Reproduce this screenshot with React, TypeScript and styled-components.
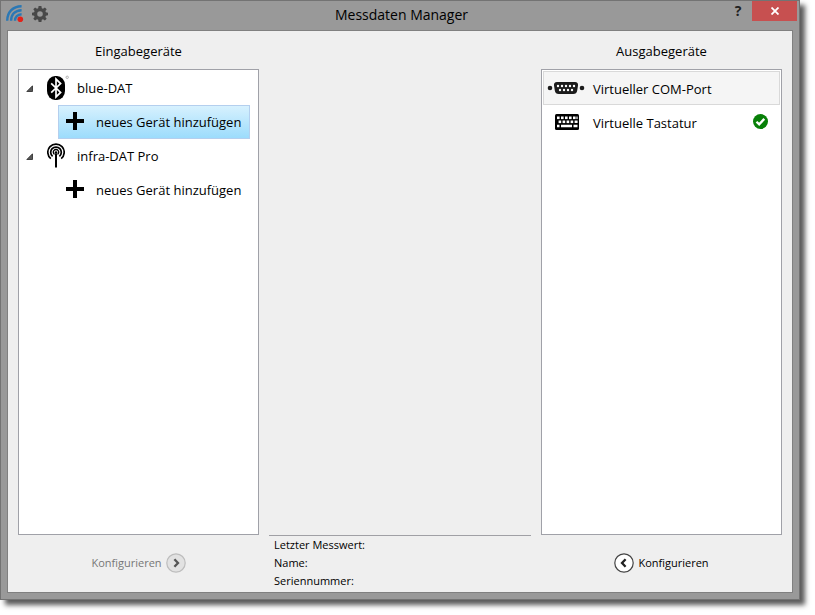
import React, { useState } from "react";
import styled, { createGlobalStyle, css } from "styled-components";

const GlobalStyle = createGlobalStyle`
  *, *::before, *::after { box-sizing: border-box; }
  body { margin: 0; background: #fff; color: #000; font-family: "Open Sans", "Noto Sans", sans-serif; font-size: 13px; line-height: 18px; }
  button { margin: 0; padding: 0; border: 0; background: none; color: inherit; font: inherit; }
  svg { display: block; flex: none; }
`;

const Desktop = styled.div`
  height: 100vh;
  padding: 0 15px 15px 0;
`;

const Window = styled.div`
  display: flex;
  flex-direction: column;
  height: 100%;
  padding: 0 6px 6px;
  border: 1px solid #737373;
  background: #999;
  box-shadow: 5px 5px 5px rgba(0, 0, 0, 0.65);
`;

const TitleBar = styled.header`
  display: grid;
  grid-template-columns: 1fr auto 1fr;
  height: 29px;
  flex: none;
  margin: 0 -4px 0 -1px;
`;

const TitleIcons = styled.div`
  display: flex;
  align-items: center;
  gap: 8px;
  height: 26px;
`;

const Title = styled.h1`
  margin: 0;
  font-size: 14px;
  font-weight: 400;
  line-height: 28px;
`;

const Controls = styled.div`
  display: flex;
  justify-content: flex-end;
  align-items: flex-start;
`;

const HelpButton = styled.button`
  width: 28px;
  height: 20px;
  font-size: 14px;
  font-weight: 700;
  color: #222;
`;

const CloseButton = styled.button`
  display: grid;
  place-items: center;
  width: 45px;
  height: 20px;
  background: #c75050;
`;

const Client = styled.main`
  flex: 1;
  min-height: 0;
  display: grid;
  grid-template-columns: 23fr 25fr 23fr;
  gap: 10px;
  padding: 0 10px;
  border: 1px solid #808080;
  background: #efefef;
`;

const Panel = styled.section`
  display: grid;
  grid-template-rows: 38px 1fr 57px;
  min-width: 0;
`;

const Heading = styled.h2`
  margin: 0;
  font-size: 13px;
  font-weight: 400;
  line-height: 40px;
  text-align: center;
`;

const List = styled.ul`
  margin: 0;
  padding: 1px;
  border: 1px solid #a0a1a8;
  background: #fff;
  list-style: none;
`;

const SubList = styled.ul`
  margin: 0;
  padding: 0 7px 0 38px;
  list-style: none;
`;

const GroupRow = styled.div`
  display: flex;
  align-items: center;
  height: 34px;
  padding-left: 3px;
`;

const Toggle = styled.button`
  display: grid;
  place-items: center;
  width: 12px;
  height: 16px;
  margin-right: 12px;
`;

const GroupIcon = styled.span`
  width: 30px;
`;

const AddButton = styled.button<{ $selected?: boolean }>`
  display: flex;
  align-items: center;
  gap: 11px;
  width: 100%;
  height: 34px;
  padding-left: 7px;
  border: 1px solid transparent;
  white-space: nowrap;
  ${(p) => p.$selected && css`
    border-color: #b4cfee;
    background: linear-gradient(#d7f1fe, #9cdcfc);
  `}
`;

const OutputRow = styled.button<{ $selected?: boolean }>`
  display: grid;
  grid-template-columns: 38px 1fr auto;
  align-items: center;
  gap: 8px;
  width: 100%;
  height: 34px;
  padding: 0 11px 0 3px;
  border: 1px solid ${(p) => (p.$selected ? "#d9d9d9" : "transparent")};
  background: ${(p) => (p.$selected ? "#f5f5f5" : "transparent")};
  text-align: left;
`;

const OutputName = styled.span`
  padding-top: 2px;
`;

const Footer = styled.footer`
  display: flex;
  justify-content: center;
  align-items: center;
  padding-bottom: 2px;
`;

const ConfigButton = styled.button`
  display: flex;
  align-items: center;
  gap: 4px;
  font-size: 11px;
  white-space: nowrap;
  &:disabled { color: #777; }
`;

const Details = styled.dl`
  align-self: end;
  margin: 0;
  padding: 0 5px 2px;
  border-top: 1px solid #a0a0a5;
  font-size: 11px;
`;

const DetailRow = styled.div`
  display: flex;
  gap: 4px;
  height: 18px;
`;

const DetailValue = styled.dd`
  margin: 0;
`;

const LogoIcon = () => (
  <svg width="18" height="18" viewBox="0 0 18 18" fill="none" stroke="#2b78b5" strokeWidth="2.4">
    <path d="M1.2 15.8C1.2 7.5 6.5 1.3 15.6 1.2M5.1 15.8C5.1 9.5 9 5.4 15.6 5.2M9 15.8c0-3.8 2.6-6.4 6.6-6.6" />
    <circle cx="14.3" cy="14.3" r="2.8" fill="#e32219" stroke="none" />
  </svg>
);

const GearIcon = () => (
  <svg width="16" height="16" viewBox="0 0 16 16" fill="#484848">
    <path fillRule="evenodd" d="M6.6 0h2.8l.4 2.2 1.2.5 1.9-1.3 1.8 1.8-1.3 1.9.5 1.2 2.1.4v2.6l-2.1.4-.5 1.2 1.3 1.9-1.8 1.8-1.9-1.3-1.2.5-.4 2.2H6.6l-.4-2.2-1.2-.5-1.9 1.3-1.8-1.8 1.3-1.9-.5-1.2L0 9.3V6.7l2.1-.4.5-1.2-1.3-1.9 1.8-1.8L5 2.7l1.2-.5zM8 5.2a2.8 2.8 0 1 0 0 5.6 2.8 2.8 0 0 0 0-5.6z" />
  </svg>
);

const CloseIcon = () => (
  <svg width="8" height="8" viewBox="0 0 8 8" stroke="#fff" strokeWidth="1.8">
    <path d="M.5.5l7 7M7.5.5l-7 7" />
  </svg>
);

const ExpandedIcon = () => (
  <svg width="7" height="7" viewBox="0 0 7 7">
    <path d="M6.5.8v5.7H.8z" fill="#595959" stroke="#262626" strokeWidth=".8" />
  </svg>
);

const BluetoothIcon = () => (
  <svg width="22" height="26" viewBox="0 0 22 26" fill="none">
    <rect x="0" y="1" width="18" height="24" rx="8" ry="9" fill="#000" />
    <path d="M4.2 8.4l9.4 9-4.6 4.5V4.1l4.6 4.5-9.4 9" stroke="#fff" strokeWidth="1.7" />
    <circle cx="20.2" cy="2.3" r="1.2" stroke="#aaa" strokeWidth=".9" />
  </svg>
);

const AntennaIcon = () => (
  <svg width="18" height="26" viewBox="0 0 18 26" fill="none" stroke="#000" strokeWidth="1.7">
    <path d="M3.800 15.600A8.200 8.200 0 1 1 14.200 15.600M5.600 13.400a5.300 5.300 0 1 1 6.800 0" />
    <path d="M7.500 11.400a2.700 2.700 0 1 1 3 0" strokeWidth="1.4" />
    <path d="M9 10.500V24.500" strokeWidth="2" />
    <circle cx="9" cy="9.500" r="1.3" fill="#000" stroke="none" />
  </svg>
);

const PlusIcon = () => (
  <svg width="19" height="20" viewBox="0 0 19 20" stroke="#000" strokeWidth="4">
    <path d="M0 9h18M9 0v18" />
  </svg>
);

const SerialIcon = () => (
  <svg width="38" height="14" viewBox="0 0 38 14" fill="#1c1c1c">
    <circle cx="3" cy="7" r="2.3" />
    <circle cx="35" cy="7" r="2.3" />
    <path d="M10 1h18q3.4 0 3 3.500l-.8 5q-.5 3.500-4 3.500H11.800q-3.500 0-4-3.500l-.8-5Q6.600 1 10 1z" />
    <g fill="#fff">
      {[11, 15, 19, 23, 27].map((x) => <circle key={x} cx={x} cy="5" r="1.2" />)}
      {[13, 17, 21, 25].map((x) => <circle key={x} cx={x} cy="9" r="1.2" />)}
    </g>
  </svg>
);

const KeyboardIcon = () => (
  <svg width="38" height="16" viewBox="0 0 38 16">
    <rect x="8" width="24" height="16" rx="1.5" />
    <g fill="#fff">
      {[10, 14, 18, 22, 26].map((x) => <rect key={x} x={x} y="2.5" width="2.6" height="2.6" />)}
      <rect x="29.4" y="2.5" width="1.2" height="2.6" />
      {[11, 15, 19, 23].map((x) => <rect key={x} x={x + 0.6} y="6.5" width="2.6" height="2.6" />)}
      <path d="M27.6 6.5h3v2.6h-3zM10 10.7h2.5v2.6H10zM14 10.7h11v2.6H14zM26.5 10.7h4v2.6h-4z" />
    </g>
  </svg>
);

const CheckIcon = () => (
  <svg width="15" height="17" viewBox="0 0 15 17" fill="none">
    <circle cx="7.5" cy="7.5" r="7.5" fill="#088008" />
    <path d="M3.5 7.7l2.700 2.700 5.100-5.500" stroke="#fff" strokeWidth="2.3" />
  </svg>
);

const ArrowIcon = ({ direction }: { direction: "left" | "right" }) => {
  const left = direction === "left";
  return (
    <svg width="20" height="20" viewBox="0 0 20 20">
      <circle cx="10" cy="10" r="9.2" fill={left ? "#fff" : "#e2e2e2"} stroke={left ? "#444" : "#bdbdbd"} strokeWidth="1.2" />
      <path d={left ? "M11.6 6.2L8 10l3.6 3.8" : "M8.4 6.2L12 10l-3.6 3.8"} fill="none" stroke={left ? "#222" : "#555"} strokeWidth="2.3" />
    </svg>
  );
};

const groups = [
  { name: "blue-DAT", icon: <BluetoothIcon /> },
  { name: "infra-DAT Pro", icon: <AntennaIcon /> },
];

const outputs = [
  { name: "Virtueller COM-Port", icon: <SerialIcon />, active: false },
  { name: "Virtuelle Tastatur", icon: <KeyboardIcon />, active: true },
];

export default function App() {
  const [input, setInput] = useState("blue-DAT");
  const [output, setOutput] = useState("Virtueller COM-Port");
  return (
    <Desktop>
      <GlobalStyle />
      <Window>
        <TitleBar>
          <TitleIcons><LogoIcon /><GearIcon /></TitleIcons>
          <Title>Messdaten Manager</Title>
          <Controls>
            <HelpButton>?</HelpButton>
            <CloseButton aria-label="Schließen"><CloseIcon /></CloseButton>
          </Controls>
        </TitleBar>
        <Client>
          <Panel>
            <Heading>Eingabegeräte</Heading>
            <List>
              {groups.map((g) => (
                <li key={g.name}>
                  <GroupRow>
                    <Toggle aria-label={g.name} aria-expanded="true"><ExpandedIcon /></Toggle>
                    <GroupIcon>{g.icon}</GroupIcon>
                    {g.name}
                  </GroupRow>
                  <SubList>
                    <li>
                      <AddButton $selected={input === g.name} onClick={() => setInput(g.name)}>
                        <PlusIcon />neues Gerät hinzufügen
                      </AddButton>
                    </li>
                  </SubList>
                </li>
              ))}
            </List>
            <Footer>
              <ConfigButton disabled>
                Konfigurieren<ArrowIcon direction="right" />
              </ConfigButton>
            </Footer>
          </Panel>
          <Details>
            {["Letzter Messwert:", "Name:", "Seriennummer:"].map((label) => (
              <DetailRow key={label}><dt>{label}</dt><DetailValue /></DetailRow>
            ))}
          </Details>
          <Panel>
            <Heading>Ausgabegeräte</Heading>
            <List>
              {outputs.map((o) => (
                <li key={o.name}>
                  <OutputRow $selected={output === o.name} onClick={() => setOutput(o.name)}>
                    {o.icon}<OutputName>{o.name}</OutputName>{o.active && <CheckIcon />}
                  </OutputRow>
                </li>
              ))}
            </List>
            <Footer>
              <ConfigButton>
                <ArrowIcon direction="left" />Konfigurieren
              </ConfigButton>
            </Footer>
          </Panel>
        </Client>
      </Window>
    </Desktop>
  );
}
